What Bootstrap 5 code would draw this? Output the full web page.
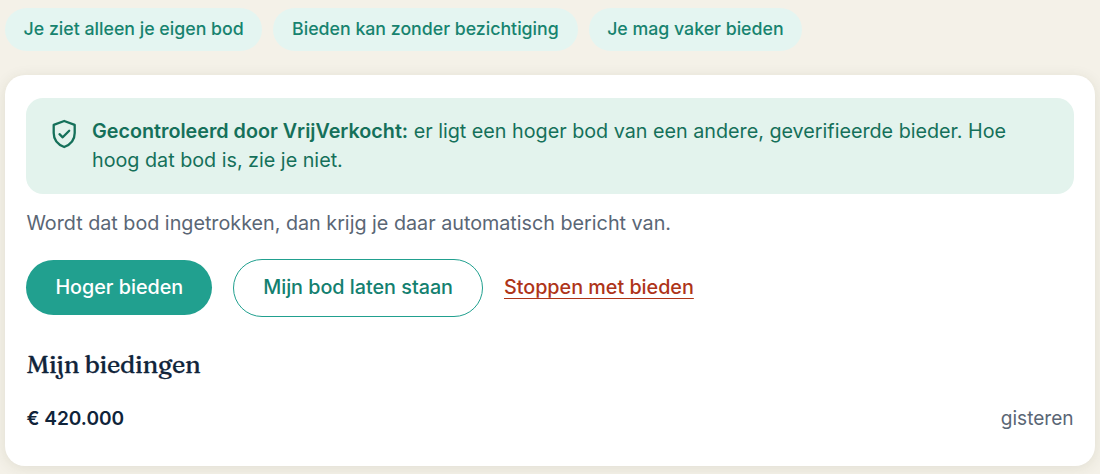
<!DOCTYPE html>
<html lang="nl">
<head>
<meta charset="utf-8">
<meta name="viewport" content="width=device-width, initial-scale=1">
<title>Mijn biedingen</title>
<link href="https://cdn.jsdelivr.net/npm/bootstrap@5.3.0/dist/css/bootstrap.min.css" rel="stylesheet">
<style>
body{background:#f4f1e8;font-family:Inter,sans-serif;font-size:19.74px;line-height:29px;color:#10243a}
.page{padding:8px 5px;height:474px}
.chips{gap:11px;margin-bottom:23.5px}
.chip{background:#e4f5f1;color:#17836f;font-size:17.74px;font-weight:500;height:43px;padding:0 18.8px 2px 18.6px;white-space:nowrap}
.bid-card{border-radius:20px;height:391.5px;padding:23.5px 21.4px 0;box-shadow:0 2px 14px rgba(60,60,20,.10)}
.notice{background:#e3f3ed;color:#15705a;border-radius:17px;height:96px;padding:19px 24px 0 25px;gap:13.6px}
.notice svg{margin-top:1.5px}
.notice strong{font-weight:600}
.muted{color:#5a6675}
.pill{height:55px;padding:0 29px;font-size:19.74px;font-weight:500;border:0;border-radius:29px;white-space:nowrap}
.pill-main,.pill-main:hover{background:#21a08f;color:#fff}
.pill-line,.pill-line:hover{height:58px;border:1.4px solid #21a08f;color:#13806f;background:#fff}
.stop{color:#ae3418;font-weight:500;text-decoration:underline;text-decoration-thickness:1.3px;text-underline-offset:4px}
h2{font-family:Fraunces,"Liberation Serif",serif;font-weight:500;font-size:25.4px;letter-spacing:-.3px;line-height:32px;-webkit-text-stroke:.3px currentColor}
.bid-row{font-size:19.1px}
.amount{font-weight:600}
</style>
</head>
<body>
<main class="page">
  <div class="chips d-flex">
    <span class="chip rounded-pill d-flex align-items-center">Je ziet alleen je eigen bod</span>
    <span class="chip rounded-pill d-flex align-items-center">Bieden kan zonder bezichtiging</span>
    <span class="chip rounded-pill d-flex align-items-center">Je mag vaker bieden</span>
  </div>
  <section class="bid-card bg-white">
    <div class="notice d-flex align-items-start">
      <svg class="flex-shrink-0" width="27" height="30" viewBox="0 0 27 30" fill="none" stroke="currentColor" stroke-width="2.3" stroke-linecap="round" stroke-linejoin="round"><path d="M13.2 2 L23.7 5.8 V14 C23.7 21 18.9 25.8 13.2 28 C7.5 25.8 2.7 21 2.7 14 V5.8 Z"/><path d="M8.5 15.2 L11.7 18.3 L18.2 11.7"/></svg>
      <div><strong>Gecontroleerd door VrijVerkocht:</strong> er ligt een hoger bod van een andere, geverifieerde bieder. Hoe hoog dat bod is, zie je niet.</div>
    </div>
    <p class="muted" style="margin:15px 0 20.5px">Wordt dat bod ingetrokken, dan krijg je daar automatisch bericht van.</p>
    <div class="actions d-flex align-items-center" style="gap:21px">
      <button class="btn pill pill-main">Hoger bieden</button>
      <button class="btn pill pill-line">Mijn bod laten staan</button>
      <a class="stop" href="#">Stoppen met bieden</a>
    </div>
    <h2 style="margin:31px 0 24px">Mijn biedingen</h2>
    <div class="bid-row d-flex justify-content-between">
      <span class="amount">€ 420.000</span><span class="muted">gisteren</span>
    </div>
  </section>
</main>
<script src="https://cdn.jsdelivr.net/npm/bootstrap@5.3.0/dist/js/bootstrap.bundle.min.js"></script>
</body>
</html>
